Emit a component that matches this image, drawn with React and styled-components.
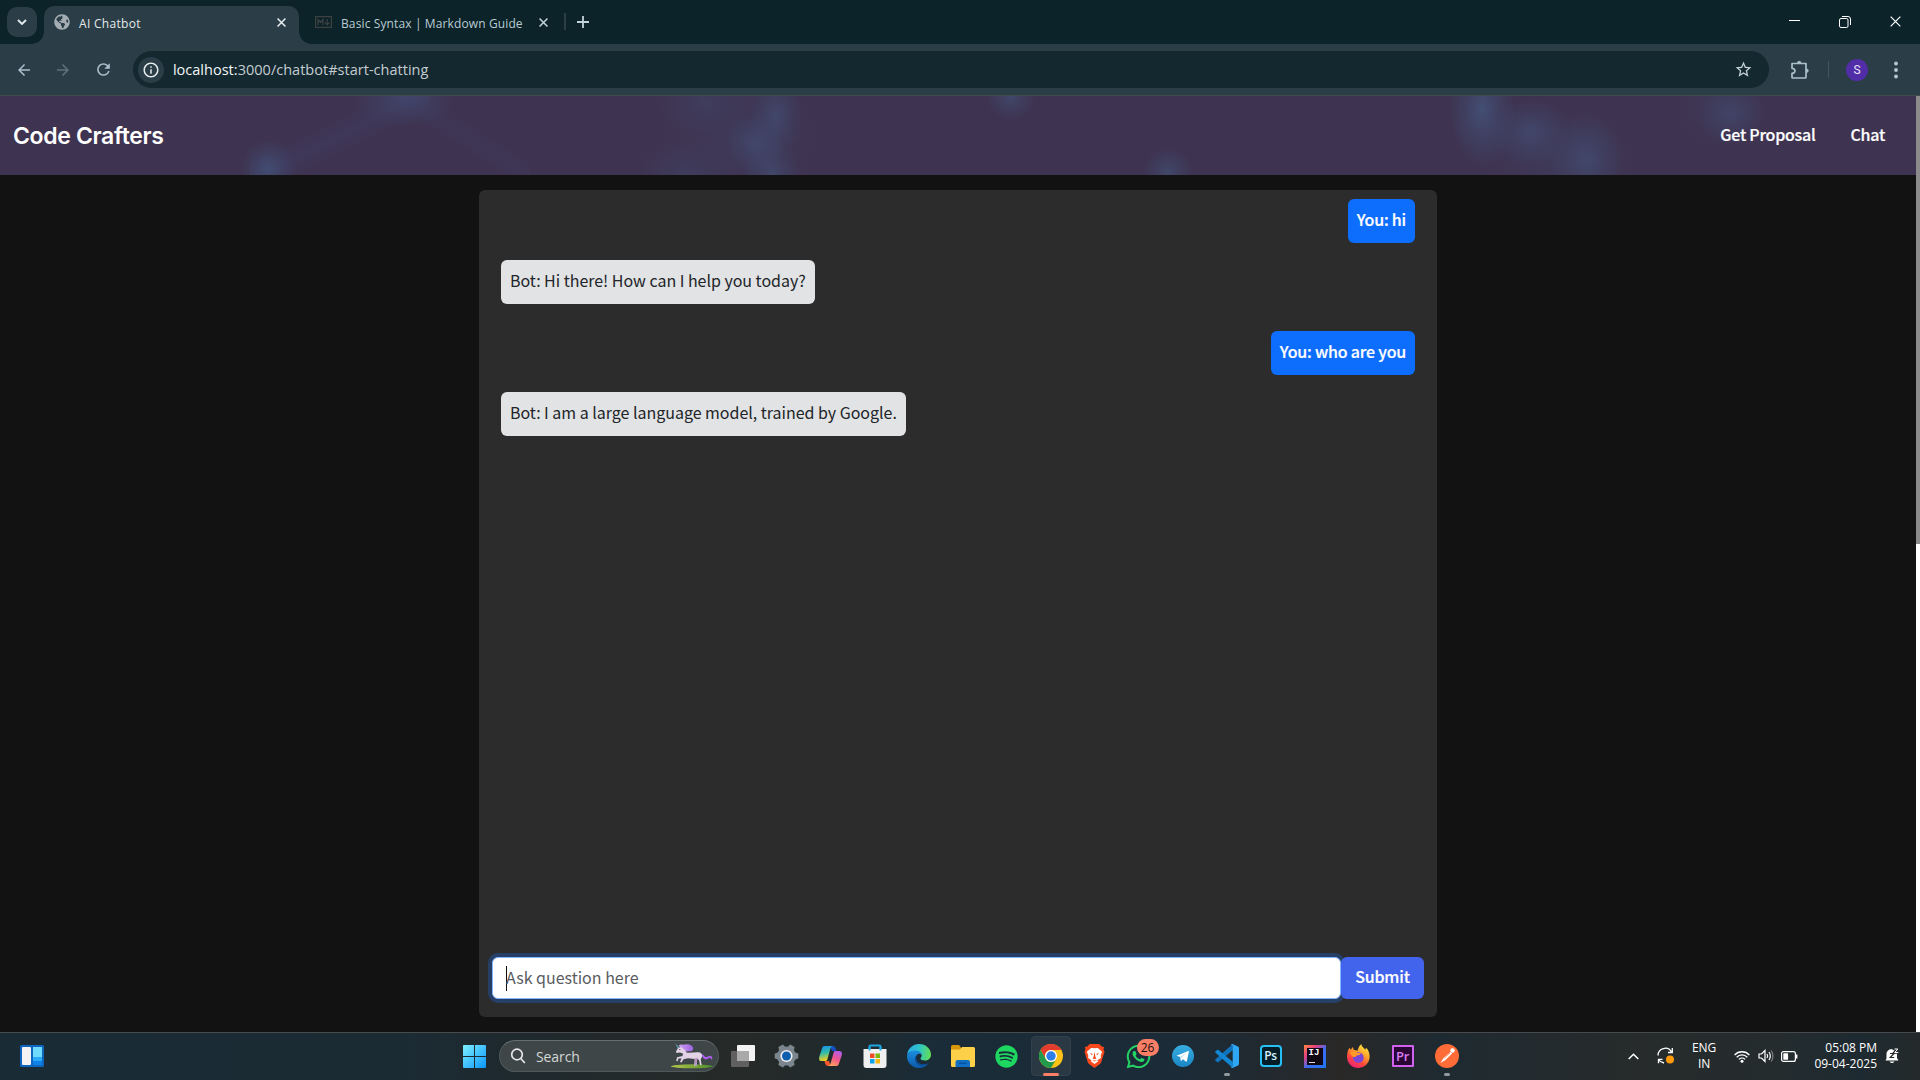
import React from "react";
import styled, { createGlobalStyle, css } from "styled-components";
import { FaSpotify, FaWhatsapp, FaGlobeAmericas } from "react-icons/fa";
import { MdStarOutline, MdRefresh, MdArrowBack, MdArrowForward, MdOutlineInfo } from "react-icons/md";

const GlobalStyle = createGlobalStyle`
  *, *::before, *::after { box-sizing: border-box; }
  html, body { margin: 0; background: #121212; overflow: hidden; }
  svg { display: block; flex: none; }
`;

const ui = `"Open Sans", "Noto Sans", sans-serif`;
const web = `"Noto Sans CJK JP", "Noto Sans", sans-serif`;

const Screen = styled.div`
  width: 1920px;
  height: 1080px;
  display: flex;
  flex-direction: column;
  overflow: hidden;
`;

/* ---------- browser chrome ---------- */
const TabStrip = styled.div`
  height: 44px;
  flex: none;
  display: flex;
  align-items: flex-end;
  padding-left: 7px;
  background: #0b2329;
  font-family: ${ui};
  font-size: 12px;
`;
const TabSearch = styled.div`
  width: 30px;
  height: 30px;
  margin: 0 7px 7px 0;
  border-radius: 10px;
  display: grid;
  place-items: center;
  background: #2b3e47;
`;
const Tab = styled.div`
  height: 38px;
  display: flex;
  align-items: center;
  padding-bottom: 6px;
  color: ${(p) => (p.$active ? "#e3e8ea" : "#b9cbd3")};
  width: ${(p) => (p.$active ? 255 : 265)}px;
  padding-left: ${(p) => (p.$active ? 10 : 16)}px;
  ${(p) =>
    p.$active &&
    css`
      position: relative;
      background: #2b3e47;
      border-radius: 10px 10px 0 0;
      &::before, &::after {
        content: "";
        position: absolute;
        bottom: 0;
        width: 12px;
        height: 12px;
      }
      &::before { left: -12px; background: radial-gradient(circle at 0 0, transparent 11.5px, #2b3e47 12px); }
      &::after { right: -12px; background: radial-gradient(circle at 100% 0, transparent 11.5px, #2b3e47 12px); }
    `}
`;
const TabTitle = styled.span`
  flex: 1;
  margin-left: ${(p) => p.$gap}px;
  white-space: nowrap;
  line-height: 18px;
  padding-top: 4px;
  letter-spacing: ${(p) => p.$track}px;
`;
const TabClose = styled.span`
  width: 12px;
  margin-right: ${(p) => p.$right}px;
`;
const TabDivider = styled.div`
  width: 2px;
  height: 17px;
  margin: 0 11px 14px 0;
  background: #2b3e47;
`;
const NewTab = styled.div`
  height: 44px;
  display: flex;
  align-items: center;
`;
const WindowControls = styled.div`
  margin-left: auto;
  height: 43px;
  display: grid;
  grid-template-columns: repeat(3, 50.5px);
  place-items: center;
  padding-bottom: 2px;
  margin-right: -1px;
`;
const Toolbar = styled.div`
  height: 52px;
  flex: none;
  display: flex;
  align-items: center;
  padding: 0 13px 0 15px;
  background: #2b3e47;
  border-bottom: 1px solid #40494b;
  color: #a9c0cb;
`;
const NavButton = styled.div`
  width: 39.3px;
  flex: none;
  display: flex;
  opacity: ${(p) => (p.$dim ? 0.4 : 1)};
`;
const AddressBar = styled.div`
  width: 1636px;
  flex: none;
  height: 37px;
  border-radius: 19px;
  display: flex;
  align-items: center;
  padding: 0 16px 0 5px;
  background: #142830;
  color: #c4d0d5;
`;
const SiteInfo = styled.div`
  width: 26px;
  height: 26px;
  border-radius: 50%;
  display: grid;
  place-items: center;
  background: #2b3e47;
  color: #e6ebed;
`;
const Url = styled.div`
  flex: 1;
  margin-left: 9px;
  font: 14.5px/20px ${ui};
  letter-spacing: 0.02px;
  color: #c4cdd0;
  b { font-weight: 400; color: #f2f5f6; }
`;
const ExtensionSlot = styled.div`
  padding-left: 21px;
`;
const ToolDivider = styled.div`
  width: 2px;
  height: 17px;
  margin: 0 18px 0 18px;
  background: #43545d;
`;
const Avatar = styled.div`
  width: 22px;
  height: 22px;
  flex: none;
  border-radius: 50%;
  margin-right: 17px;
  display: grid;
  place-items: center;
  background: #512da8;
  color: #e9e3f5;
  font: 12px/22px Roboto, sans-serif;
`;

/* ---------- web page ---------- */
const Viewport = styled.div`
  height: 936px;
  flex: none;
  display: flex;
  background: #121212;
`;
const Page = styled.div`
  flex: 1;
  display: flex;
  flex-direction: column;
  align-items: center;
`;
const ScrollTrack = styled.div`
  width: 4px;
  background: #fff;
`;
const ScrollThumb = styled.div`
  height: 448px;
  background: #8b8b8b;
`;
const glow = (x, y, w, h, a) =>
  `radial-gradient(ellipse ${w}px ${h}px at ${x}px ${y}px, rgba(68,88,128,${a}), rgba(66,82,122,${a * 0.5}) 50%, rgba(64,70,112,0))`;
const Header = styled.header`
  width: 100%;
  height: 79px;
  display: flex;
  align-items: center;
  padding: 0 31px 0 13px;
  color: #fff;
  background:
    ${[
      glow(268, 72, 28, 30, 0.65),
      glow(404, -2, 55, 34, 0.45),
      glow(776, 20, 26, 44, 0.5),
      glow(755, 48, 30, 32, 0.5),
      glow(772, 78, 28, 34, 0.5),
      glow(1011, 0, 26, 26, 0.55),
      glow(1168, 76, 26, 26, 0.55),
      glow(1482, 14, 34, 58, 0.75),
      glow(1530, 36, 40, 34, 0.5),
      glow(1587, 64, 36, 46, 0.5),
      glow(1731, 18, 34, 30, 0.4),
      glow(705, 6, 50, 34, 0.2),
      glow(684, 78, 56, 34, 0.2),
      glow(1560, 60, 90, 60, 0.2),
      glow(1720, 10, 60, 60, 0.15),
      glow(740, 40, 110, 80, 0.15),
    ].join(",")},
    linear-gradient(154deg, transparent 0 36%, rgba(64,66,110,.3) 50%, transparent 64%) 250px 0 / 180px 79px no-repeat,
    linear-gradient(212deg, transparent 0 36%, rgba(64,66,110,.2) 50%, transparent 64%) 400px 0 / 130px 79px no-repeat,
    #3e3350;
`;
const Brand = styled.div`
  flex: 1;
  font: 600 23px/30px Inter, sans-serif;
  letter-spacing: -0.35px;
`;
const NavLink = styled.a`
  margin-left: 35px;
  padding-bottom: 4px;
  font: 500 16px/24px ${web};
  letter-spacing: -0.25px;
  -webkit-text-stroke: 0.2px #fff;
`;
const ChatPanel = styled.main`
  width: 958px;
  height: 827px;
  margin-top: 15px;
  border-radius: 6px;
  display: flex;
  flex-direction: column;
  justify-content: space-between;
  padding: 9px 13px 18px;
  background: #2c2c2c;
`;
const Messages = styled.div`
  display: flex;
  flex-direction: column;
  padding: 0 9px;
`;
const Bubble = styled.div`
  height: 44px;
  align-self: ${(p) => (p.$mine ? "flex-end" : "flex-start")};
  margin-bottom: ${(p) => (p.$mine ? 17 : 27)}px;
  padding: 8px 9px;
  border-radius: 6px;
  background: ${(p) => (p.$mine ? "#0d6efd" : "#e2e3e5")};
  color: ${(p) => (p.$mine ? "#fff" : "#212529")};
  font: ${(p) => (p.$mine ? 500 : 400)} 16px/24px ${web};
  letter-spacing: ${(p) => (p.$mine ? -0.2 : -0.02)}px;
  -webkit-text-stroke: ${(p) => (p.$mine ? "0.2px #fff" : "0")};
  white-space: nowrap;
`;
const Composer = styled.div`
  display: flex;
`;
const Field = styled.div`
  width: 849px;
  height: 42px;
  display: flex;
  align-items: center;
  padding: 0 13px 3px;
  border: 1px solid #86b7fe;
  border-radius: 6px;
  box-shadow: 0 0 0 4px #263f67;
  background: #fff;
  color: #595c5f;
  font: 16px/24px ${web};
`;
const Caret = styled.i`
  width: 1px;
  height: 25px;
  margin: 4px -1px 0 0;
  background: #111;
`;
const Submit = styled.button`
  width: 83px;
  height: 42px;
  border: 0;
  border-radius: 6px;
  padding: 0 0 4px;
  position: relative;
  background: #4263eb;
  color: #fff;
  font: 500 16px/24px ${web};
  letter-spacing: -0.2px;
  -webkit-text-stroke: 0.2px #fff;
`;

/* ---------- taskbar ---------- */
const Taskbar = styled.div`
  height: 48px;
  flex: none;
  display: flex;
  align-items: center;
  padding-bottom: 1px;
  border-top: 1px solid #474b4d;
  background: linear-gradient(90deg, #192b35 0, #1b2b34 400px, #20292c 560px, #262a28 740px, #1f2a2e 860px, #1a2c38 930px, #1b2b37 1180px, #24292d 1290px, #292827 1340px, #1e2a31 1440px, #272b2b 1640px, #242c2e 1780px, #1d2a31 1860px, #242a2a 1920px);
  font-family: ${ui};
  color: #fff;
`;
const Widgets = styled.div`
  width: 463px;
  padding-left: 20px;
`;
const SearchBox = styled.div`
  width: 220px;
  height: 32px;
  margin: 0 1.5px 0 13px;
  border-radius: 16px;
  display: flex;
  align-items: center;
  padding: 0 5px 0 10px;
  background: #3f4647;
  border: 1px solid #50585a;
  border-top-color: #666d6f;
  color: #d3d6d7;
  font-size: 14px;
  letter-spacing: -0.1px;
  span { flex: 1; margin-left: 10px; }
`;
const AppSlot = styled.div`
  width: 44px;
  height: 40px;
  display: grid;
  place-items: center;
  position: relative;
`;
const ActiveTile = styled.div`
  width: 40px;
  height: 40px;
  border-radius: 4px;
  display: grid;
  place-items: center;
  background: #293842;
  border: 1px solid #32414a;
`;
const RunMark = styled.i`
  position: absolute;
  bottom: 0;
  left: 50%;
  height: 3px;
  border-radius: 2px;
  width: ${(p) => (p.$active ? 16 : 6)}px;
  margin-left: ${(p) => (p.$active ? -8 : -3)}px;
  background: ${(p) => (p.$active ? "#fa7f66" : "#929a9f")};
`;
const Badge = styled.span`
  position: absolute;
  left: 20px;
  top: 3px;
  width: 22px;
  height: 17px;
  border-radius: 9px;
  background: #fa7f66;
  color: #1c1210;
  font-size: 12px;
  line-height: 17px;
  text-align: center;
`;
const Tray = styled.div`
  margin-left: auto;
  padding-right: 13px;
  display: flex;
  align-items: center;
`;
const TrayItem = styled.div`
  width: ${(p) => p.$w}px;
  display: grid;
  place-items: center;
`;
const TrayText = styled.div`
  width: ${(p) => p.$w}px;
  text-align: ${(p) => p.$align};
  font-size: 12px;
  line-height: 16px;
  letter-spacing: ${(p) => p.$track}px;
  white-space: nowrap;
`;

const Cross = ({ size = 9, w = 1.7, color = "#e6ecee" }) => (
  <svg width={size} height={size} viewBox="0 0 10 10" stroke={color} strokeWidth={w}>
    <path d="M.6.6 9.4 9.4M9.4.6.6 9.4" />
  </svg>
);

const WidgetIcon = () => (
  <svg width="24" height="22" viewBox="0 0 24 22">
    <rect width="24" height="22" rx="1.5" fill="#0f66c0" />
    <rect x="2" y="2" width="9" height="18" rx="1" fill="#f3f3f3" />
    <rect x="13" y="2" width="9" height="10" fill="#6fdcff" />
    <rect x="13" y="12" width="9" height="4" fill="#29a9f7" />
    <rect x="13" y="16" width="9" height="4" fill="#0f80e8" />
  </svg>
);
const StartIcon = () => (
  <svg width="23" height="23" viewBox="0 0 23 23">
    <defs>
      <linearGradient id="win" x1="0" y1="0" x2="1" y2="1">
        <stop offset="0" stopColor="#7df0ff" /><stop offset="1" stopColor="#0a96fb" />
      </linearGradient>
    </defs>
    <path fill="url(#win)" d="M0 1q0-1 1-1h10v11H0zM12 0h10q1 0 1 1v10H12zM0 12h11v11H1q-1 0-1-1zM12 12h11v10q0 1-1 1H12z" />
  </svg>
);
const Unicorn = () => (
  <svg width="42" height="26" viewBox="0 0 42 26">
    <defs>
      <linearGradient id="grass" x1="0" x2="1"><stop offset="0" stopColor="#b6c94b" /><stop offset="1" stopColor="#4c8b2a" /></linearGradient>
      <linearGradient id="mane" x1="0" x2="1"><stop offset="0" stopColor="#d3a0f5" /><stop offset="1" stopColor="#9a62de" /></linearGradient>
    </defs>
    <ellipse cx="21" cy="23.3" rx="21" ry="2" fill="url(#grass)" />
    <path d="M4 .3 8.300 4.600 7 5.400z" fill="#58b7c4" />
    <path d="M7.500 2.500C10 .8 12 2 14 1.500s5-.5 7 1.500 1.500 3.500 0 5L15 8.500 10 5z" fill="url(#mane)" />
    <path d="M30 11.500c2.500-1.500 3.500 3 5.500 2.500s2.500-2 4.500-1 1.500 3 .5 4c-.3-1.500-1.500-2.500-2.500-2-1.500 1.500-5 2-6-.5-.5-1.200-1.500-1.500-2.500-1.500z" fill="#aa5ff0" />
    <path d="M7 5 10 4l4 3 1.500 2.500c4 .8 9-.8 13.500 0 2.300 1 2.500 3 1.700 5l-1 2 1 5.500H29l-1-5-2-1.200-.5 7.200h-2.200l.4-7-6.700-.8-4.500 1-2 3.300-1.500-.5 1.500-3.500-3-.1-.8 2.800-1.500-.3.800-3.600 5.500-1.200L12 10.500 8.800 9.500 5.500 10 5 8.500z" fill="#e2d2e6" />
    <path d="M22 15.500c2 0 3.500-.5 4.500-1.500L25.500 23H23.700l.4-7z" fill="#b795c3" />
    <circle cx="8.800" cy="6.500" r=".6" fill="#432c55" />
  </svg>
);
const TaskView = () => (
  <svg width="24" height="22" viewBox="0 0 24 22">
    <rect x="6" width="18" height="16" rx="1" fill="#f3f3f3" />
    <rect y="6" width="18" height="16" rx="1" fill="#606060" />
    <path d="M6 6h12v10H6z" fill="#a9a9a9" />
  </svg>
);
const Gear = () => (
  <svg width="25" height="24" viewBox="-12.5 -12 25 24">
    <g fill="#7b858e">
      <circle r="9.5" />
      {[0, 60, 120].map((a) => (
        <path key={a} transform={`rotate(${a + 30})`} d="M-2.600-11.800h5.200l1.400 4.800v14l-1.400 4.800h-5.200L-4 7V-7z" />
      ))}
    </g>
    <circle r="6.1" fill="#eef0f2" />
    <circle r="4.5" fill="#0f5fae" />
  </svg>
);
const Copilot = () => (
  <svg width="23" height="22" viewBox="0 0 23 22">
    <defs>
      <linearGradient id="c1" x1="0" y1="0" x2=".2" y2="1"><stop offset="0" stopColor="#1a8df0" /><stop offset=".5" stopColor="#2fbbaa" /><stop offset="1" stopColor="#f1cf1e" /></linearGradient>
      <linearGradient id="c2" x1=".7" y1="0" x2=".3" y2="1"><stop offset="0" stopColor="#b55bea" /><stop offset=".5" stopColor="#f0558d" /><stop offset="1" stopColor="#fba35a" /></linearGradient>
    </defs>
    <path d="M11 1h3c2 0 3 2 3.500 5H13z" fill="#154cc0" />
    <path d="M12 21H9c-2 0-3-2-3.500-5H10z" fill="#f4572c" />
    <path d="M5.500 1H14c-2 .5-2.500 2-3 4L8.500 14c-.5 1.500-1 2-2.500 2H3c-3 0-3.500-2-2.500-5L3 3.500C3.500 2 4 1 5.500 1z" fill="url(#c1)" />
    <path d="M17.500 21H9c2-.5 2.500-2 3-4l2.500-9c.5-1.500 1-2 2.500-2h3c3 0 3.500 2 2.500 5L20 18.500c-.5 1.500-1 2.500-2.500 2.500z" fill="url(#c2)" />
  </svg>
);
const Store = () => (
  <svg width="24" height="24" viewBox="0 0 24 24">
    <path d="M6.500 8V2.500q0-1 1-1h9q1 0 1 1V8" fill="none" stroke="#1ea7e0" strokeWidth="2" />
    <path d="M.5 5h23v16q0 3-3 3h-17q-3 0-3-3z" fill="#f0f0f0" />
    <path d="M6.500 6.500V3M17.500 6.500V3" stroke="#1ea7e0" strokeWidth="2" />
    <path fill="#ee4b28" d="M7 9.500h4.500V14H7z" /><path fill="#7bb70c" d="M12.500 9.500H17V14h-4.500z" />
    <path fill="#10a2ec" d="M7 15h4.500v4.500H7z" /><path fill="#fdb713" d="M12.500 15H17v4.500h-4.500z" />
  </svg>
);
const Edge = () => (
  <svg width="24" height="24" viewBox="0 0 24 24">
    <defs>
      <linearGradient id="e1" x1="0" y1=".3" x2="1" y2=".4"><stop offset="0" stopColor="#2aa9e8" /><stop offset=".5" stopColor="#2dc5c9" /><stop offset="1" stopColor="#62dd55" /></linearGradient>
      <linearGradient id="e2" x1="0" y1="0" x2="0" y2="1"><stop offset="0" stopColor="#1c8fe0" /><stop offset="1" stopColor="#0c58a8" /></linearGradient>
    </defs>
    <path d="M0 11C1 4 6 0 12 0c7 0 12 5 12 10.500 0 4-3 6-6 6-3 0-4.500-1-4.500-2 0-.8 1.200-1.200 1.200-3C14.700 9 12 7 8.500 7 4 7 1 9 0 11z" fill="url(#e1)" />
    <path d="M0 11.500C1 8.500 4.500 6.500 8.500 6.500c4 0 6 2.500 6.200 4.500-1-1-2.500-1.500-3.700-1-3 1.500-3 7 1 9.500 3.500 2 7.500 1 9.700-.500C19.500 22 16 24 12 24 5 24-.5 18 0 11.500z" fill="url(#e2)" />
    <path d="M8.300 13c-1.500 5 2.500 9 7 8.800 3 0 5-1.300 6.400-2.800-3 1.500-7 1.700-9.700 0C9.800 17.500 9 15.500 9.200 12z" fill="#0a4a92" />
  </svg>
);
const Explorer = () => (
  <svg width="24" height="22" viewBox="0 0 24 22">
    <path d="M0 1.500Q0 0 1.500 0H8l2 2.500V6H0z" fill="#d9960a" />
    <path d="M0 4.500h9L11 2h11.500Q24 2 24 3.500v17q0 1.500-1.500 1.500h-21Q0 22 0 20.500z" fill="#fdd04a" />
    <path d="M4.500 22v-5q0-2 2-2h10.500q2 0 2 2v5z" fill="#0e6fc4" />
    <path d="M8 18.300h7.500" stroke="#0a4f96" strokeWidth="1.2" />
  </svg>
);
const Chrome = () => (
  <svg width="24" height="24" viewBox="0 0 24 24">
    <circle cx="12" cy="12" r="12" fill="#fbc116" />
    <path d="M1.600 6A12 12 0 0 1 22.400 6H12a6 6 0 0 0-5.200 9z" fill="#e33b2e" />
    <path d="M1.600 6 6.800 15A6 6 0 0 0 12 18a6 6 0 0 0 5.200-3L12 24A12 12 0 0 1 1.600 6z" fill="#229a4b" />
    <circle cx="12" cy="12" r="6" fill="#fff" /><circle cx="12" cy="12" r="4.7" fill="#2f7de9" />
  </svg>
);
const BraveIcon = () => (
  <svg width="21" height="24" viewBox="0 0 22 25">
    <path d="M6 0h10l2.500 2.500L21 3l-.5 3L21.500 8 18 19q-.5 1.500-2 2.500L11 25l-5-3.500q-1.500-1-2-2.500L.5 8 1.500 6 1 3l2.500-.5z" fill="#f9481c" />
    <path d="M11 4.500l3.500-.5L19 8l-1.500 4 .2 2.500L14 17l1 1-4 3-4-3 1-1-3.700-2.500.2-2.500L3 8l4.500-4z" fill="#fff" />
    <path d="M6 9.500l3 .7-.5 1.500zM16 9.500l-3 .7.500 1.500zM11 8l1 5.500 1 1.500-2 1-2-1 1-1.500zM8.500 17.200l2.500 1 2.500-1" fill="#f9481c" />
  </svg>
);
const Telegram = () => (
  <svg width="22" height="22" viewBox="0 0 22 22">
    <defs><linearGradient id="tg" x2="0" y2="1"><stop offset="0" stopColor="#37aee2" /><stop offset="1" stopColor="#1a86c4" /></linearGradient></defs>
    <circle cx="11" cy="11" r="11" fill="url(#tg)" />
    <path d="M4.500 10.800 16.300 6q.8-.2.600.8l-2 9.300q-.2.900-1 .4l-3-2.200-1.600 1.500-.5.100-.6-3.900z" fill="#fff" />
    <path d="m8.200 12 6-4-4.900 4.800-.3 2.800z" fill="#b9d8ee" />
  </svg>
);
const VsCode = () => (
  <svg width="24" height="24" viewBox="0 0 24 24">
    <path d="M17.500.3 18 6 3 18.500.5 16.800q-.8-.8 0-1.500z" fill="#0f74bd" />
    <path d="M17.500 23.700 18 18 3 5.500.5 7.200q-.8.800 0 1.500z" fill="#1287d3" />
    <path d="m17.500 0 5.500 2.600q1 .6 1 1.600v15.600q0 1-1 1.600L17.500 24q-1 .200-1.500-.8l1.700-1V1.700L16 .8q.5-1 1.500-.8z" fill="#2ea8f4" />
  </svg>
);
const AdobeBox = styled.div`
  width: ${(p) => p.$size}px;
  height: ${(p) => p.$size}px;
  border: 2px solid ${(p) => p.$line};
  border-radius: ${(p) => p.$round}px;
  background: ${(p) => p.$fill};
  color: ${(p) => p.$ink};
  font: 600 ${(p) => p.$font}px/${(p) => p.$size - 4}px "Open Sans", sans-serif;
  letter-spacing: -0.3px;
  text-align: center;
`;
const IdeaFrame = styled.div`
  width: 22px;
  height: 23px;
  padding: 3px;
  background: linear-gradient(135deg, #fb8a3c, #e8407d 28%, #3c6cf0 55%, #2176f3);
`;
const IdeaCore = styled.div`
  width: 16px;
  height: 17px;
  padding-left: 2px;
  background: #100814;
  color: #fff;
  font: 700 9px/10px "Liberation Mono", monospace;
  &::after { content: ""; display: block; width: 6px; height: 1px; margin-top: 4px; background: #ddd; }
`;
const Firefox = () => (
  <svg width="23" height="24" viewBox="0 0 24 25">
    <defs>
      <linearGradient id="ff" x1=".85" y1="0" x2=".3" y2="1"><stop offset="0" stopColor="#fff04a" /><stop offset=".4" stopColor="#ffa22a" /><stop offset=".7" stopColor="#ff4a3c" /><stop offset="1" stopColor="#ec1e79" /></linearGradient>
    </defs>
    <path d="M1 7l1.500-3L4 6l2-3 1 3 4 1c1-3 1.500-5 4-7 0 3 3 4 4 6l1-2c3 3 4 7 3.500 11A11.700 11.700 0 0 1 12 25C5 25 0 20 0 13c0-2 .3-4 1-6z" fill="url(#ff)" />
    <circle cx="11.8" cy="14" r="5.6" fill="#7b45d8" />
    <path d="M3 9c3-2 6-1 8 0h4l-2 2.500-3 .5c-1 2-3 2-4 1z" fill="#ff9a26" />
  </svg>
);
const Postman = () => (
  <svg width="24" height="24" viewBox="0 0 24 24">
    <circle cx="12" cy="12" r="12" fill="#ff6c37" />
    <circle cx="17.5" cy="6.5" r="2.2" fill="#fff" />
    <path d="M15.500 8 17 9.500 10.500 16 5.500 19l3-5z" fill="#fff" />
    <path d="m9 14.500 6-5.500" stroke="#ff6c37" strokeWidth=".6" />
  </svg>
);
const Sync = () => (
  <svg width="18" height="18" viewBox="0 0 18 18" fill="none" stroke="#fff" strokeWidth="1.3">
    <path d="M1 8.500A7.200 7.200 0 0 1 14.500 5M15.300 1v4.500H11M5.500 12.300H1.500v4M1.500 12.500Q3.500 15.500 7 16" />
    <circle cx="13" cy="12.500" r="4" fill="#ff9b0b" stroke="none" />
  </svg>
);
const Wifi = () => (
  <svg width="16" height="13" viewBox="0 0 16 13" fill="none" stroke="#fff" strokeWidth="1.3">
    <path d="M.6 5A10 10 0 0 1 15.400 5M2.700 7.300a7.200 7.200 0 0 1 10.600 0M4.900 9.400a4.400 4.400 0 0 1 6.200 0" />
    <circle cx="8" cy="11.3" r="1.5" fill="#fff" stroke="none" />
  </svg>
);
const Volume = () => (
  <svg width="16" height="14" viewBox="0 0 16 14" fill="none" stroke="#fff" strokeWidth="1.2">
    <path d="M1 5h2.500L7 1.500v11L3.500 9H1zM9 5q1.300 2 0 4M11 3q2.600 4 0 8" />
    <path d="M13.200 1.500q3.500 5.500 0 11" stroke="#7b8184" />
  </svg>
);
const Battery = () => (
  <svg width="17" height="11" viewBox="0 0 17 11">
    <rect x=".6" y=".6" width="13.8" height="9.8" rx="2" fill="none" stroke="#fff" strokeWidth="1.2" />
    <rect x="2.3" y="2.3" width="4.8" height="6.4" rx=".6" fill="#fff" /><rect x="15" y="3.5" width="1.4" height="4" fill="#fff" />
  </svg>
);
const Bell = () => (
  <svg width="14" height="16" viewBox="0 0 14 16">
    <path d="M1.500 10.500V6.500a5 5 0 0 1 5-5.500L12 4v6l1.500 2.500H.5zM4.500 13.500h5q-2.500 3-5 0z" fill="#fff" />
    <path d="M5 5.500h4L5.200 9.500h4" fill="none" stroke="#252b2c" strokeWidth="1.2" />
    <path d="M9 .7h4L9.500 4.500h4" fill="none" stroke="#252b2c" strokeWidth="2.6" />
    <path d="M9.500 1h3.300L9.700 4.500h3.600" fill="none" stroke="#fff" />
  </svg>
);

const messages = [
  { mine: true, text: "You: hi" },
  { mine: false, text: "Bot: Hi there! How can I help you today?" },
  { mine: true, text: "You: who are you" },
  { mine: false, text: "Bot: I am a large language model, trained by Google." },
];

const apps = [
  { id: "taskview", icon: <TaskView /> },
  { id: "settings", icon: <Gear /> },
  { id: "copilot", icon: <Copilot /> },
  { id: "store", icon: <Store /> },
  { id: "edge", icon: <Edge /> },
  { id: "explorer", icon: <Explorer /> },
  { id: "spotify", icon: <FaSpotify size={23} color="#1ed760" /> },
  { id: "chrome", icon: <ActiveTile><Chrome /></ActiveTile>, run: "active" },
  { id: "brave", icon: <BraveIcon /> },
  { id: "whatsapp", icon: <FaWhatsapp size={27} color="#25d366" />, badge: "26" },
  { id: "telegram", icon: <Telegram /> },
  { id: "vscode", icon: <VsCode />, run: "idle" },
  { id: "ps", icon: <AdobeBox $size={22} $round={4} $line="#26c0f5" $fill="#041c27" $ink="#d3f2ff" $font={12}>Ps</AdobeBox> },
  { id: "idea", icon: <IdeaFrame><IdeaCore>IJ</IdeaCore></IdeaFrame> },
  { id: "firefox", icon: <Firefox /> },
  { id: "pr", icon: <AdobeBox $size={22} $round={1} $line="#d162f0" $fill="#2a0634" $ink="#d97bf5" $font={13}>Pr</AdobeBox> },
  { id: "postman", icon: <Postman />, run: "idle" },
];

export default function App() {
  return (
    <Screen>
      <GlobalStyle />
      <TabStrip>
        <TabSearch>
          <svg width="10" height="7" viewBox="0 0 10 7" fill="none" stroke="#e3eaed" strokeWidth="1.9"><path d="m1 1 4 4 4-4" /></svg>
        </TabSearch>
        <Tab $active>
          <FaGlobeAmericas size={16} color="#a3adb2" />
          <TabTitle $gap={9} $track={0.3}>AI Chatbot</TabTitle>
          <TabClose $right={10}><Cross /></TabClose>
        </Tab>
        <Tab>
          <svg width="17" height="12" viewBox="0 0 17 12" fill="none" stroke="#3d4142" strokeWidth="1.2">
            <path d="M.6.600h15.800v10.800H.6zM3 9V3.500l2.500 3 2.500-3V9M12.200 3v5.500M10 6.500l2.200 2.300 2.200-2.300" />
          </svg>
          <TabTitle $gap={9} $track={0.12}>Basic Syntax | Markdown Guide</TabTitle>
          <TabClose $right={13}><Cross color="#c3d3da" /></TabClose>
        </Tab>
        <TabDivider />
        <NewTab><svg width="12" height="12" viewBox="0 0 12 12" stroke="#c3d3da" strokeWidth="1.8"><path d="M6 0v12M0 6h12" /></svg></NewTab>
        <WindowControls>
          <svg width="11" height="11" viewBox="0 0 11 11" stroke="#fff"><path d="M0 4.500h11" /></svg>
          <svg width="12" height="12" viewBox="0 0 12 12" fill="none" stroke="#fff"><rect x=".5" y="2.500" width="8.500" height="9" rx="1.500" /><path d="M3 .5h6q2.500 0 2.500 2.500v6" /></svg>
          <Cross size={11} w={1.1} color="#fff" />
        </WindowControls>
      </TabStrip>

      <Toolbar>
        <NavButton><MdArrowBack size={18} /></NavButton>
        <NavButton $dim><MdArrowForward size={18} /></NavButton>
        <NavButton><MdRefresh size={19} /></NavButton>
        <AddressBar>
          <SiteInfo><MdOutlineInfo size={18} /></SiteInfo>
          <Url><b>localhost:</b>3000/chatbot#start-chatting</Url>
          <MdStarOutline size={19} />
        </AddressBar>
        <ExtensionSlot>
          <svg width="20" height="20" viewBox="0 0 20 20" fill="none" stroke="#a9c0cb" strokeWidth="1.7" strokeLinejoin="round">
            <path d="M2 3.500h14v13.800q0 .7-.7.700H2.700q-.7 0-.7-.700v-4c4 0 4-5 0-5z" />
            <path d="M7.500 3a1.700 1.700 0 0 1 3.400 0zM16.500 9a1.700 1.700 0 0 1 0 3.400z" fill="#a9c0cb" strokeWidth="1" />
          </svg>
        </ExtensionSlot>
        <ToolDivider />
        <Avatar>S</Avatar>
        <svg width="22" height="20" viewBox="0 0 22 20" fill="#b5c8d1"><circle cx="11" cy="3.5" r="1.9" /><circle cx="11" cy="10" r="1.9" /><circle cx="11" cy="16.5" r="1.9" /></svg>
      </Toolbar>

      <Viewport>
        <Page>
          <Header>
            <Brand>Code Crafters</Brand>
            <NavLink>Get Proposal</NavLink>
            <NavLink>Chat</NavLink>
          </Header>
          <ChatPanel>
            <Messages>
              {messages.map((m) => <Bubble key={m.text} $mine={m.mine}>{m.text}</Bubble>)}
            </Messages>
            <Composer>
              <Field><Caret />Ask question here</Field>
              <Submit>Submit</Submit>
            </Composer>
          </ChatPanel>
        </Page>
        <ScrollTrack><ScrollThumb /></ScrollTrack>
      </Viewport>

      <Taskbar>
        <Widgets><WidgetIcon /></Widgets>
        <StartIcon />
        <SearchBox>
          <svg width="16" height="16" viewBox="0 0 16 16" fill="none" stroke="#e8e8e8" strokeWidth="1.7"><circle cx="7" cy="6.5" r="5.3" /><path d="m10.800 10.500 4 4.500" /></svg>
          <span>Search</span>
          <Unicorn />
        </SearchBox>
        {apps.map((a) => (
          <AppSlot key={a.id}>
            {a.icon}
            {a.badge && <Badge>{a.badge}</Badge>}
            {a.run && <RunMark $active={a.run === "active"} />}
          </AppSlot>
        ))}
        <Tray>
          <TrayItem $w={32}><svg width="11" height="7" viewBox="0 0 11 7" fill="none" stroke="#fff" strokeWidth="1.5"><path d="m.7 6 4.800-4.800L10.300 6" /></svg></TrayItem>
          <TrayItem $w={33}><Sync /></TrayItem>
          <TrayText $w={44} $align="center" $track={-0.1}>ENG<br />IN</TrayText>
          <TrayItem $w={31}><Wifi /></TrayItem>
          <TrayItem $w={18}><Volume /></TrayItem>
          <TrayItem $w={29}><Battery /></TrayItem>
          <TrayText $w={73} $align="right" $track={0}>05:08 PM<br />09-04-2025</TrayText>
          <TrayItem $w={30}><Bell /></TrayItem>
        </Tray>
      </Taskbar>
    </Screen>
  );
}
